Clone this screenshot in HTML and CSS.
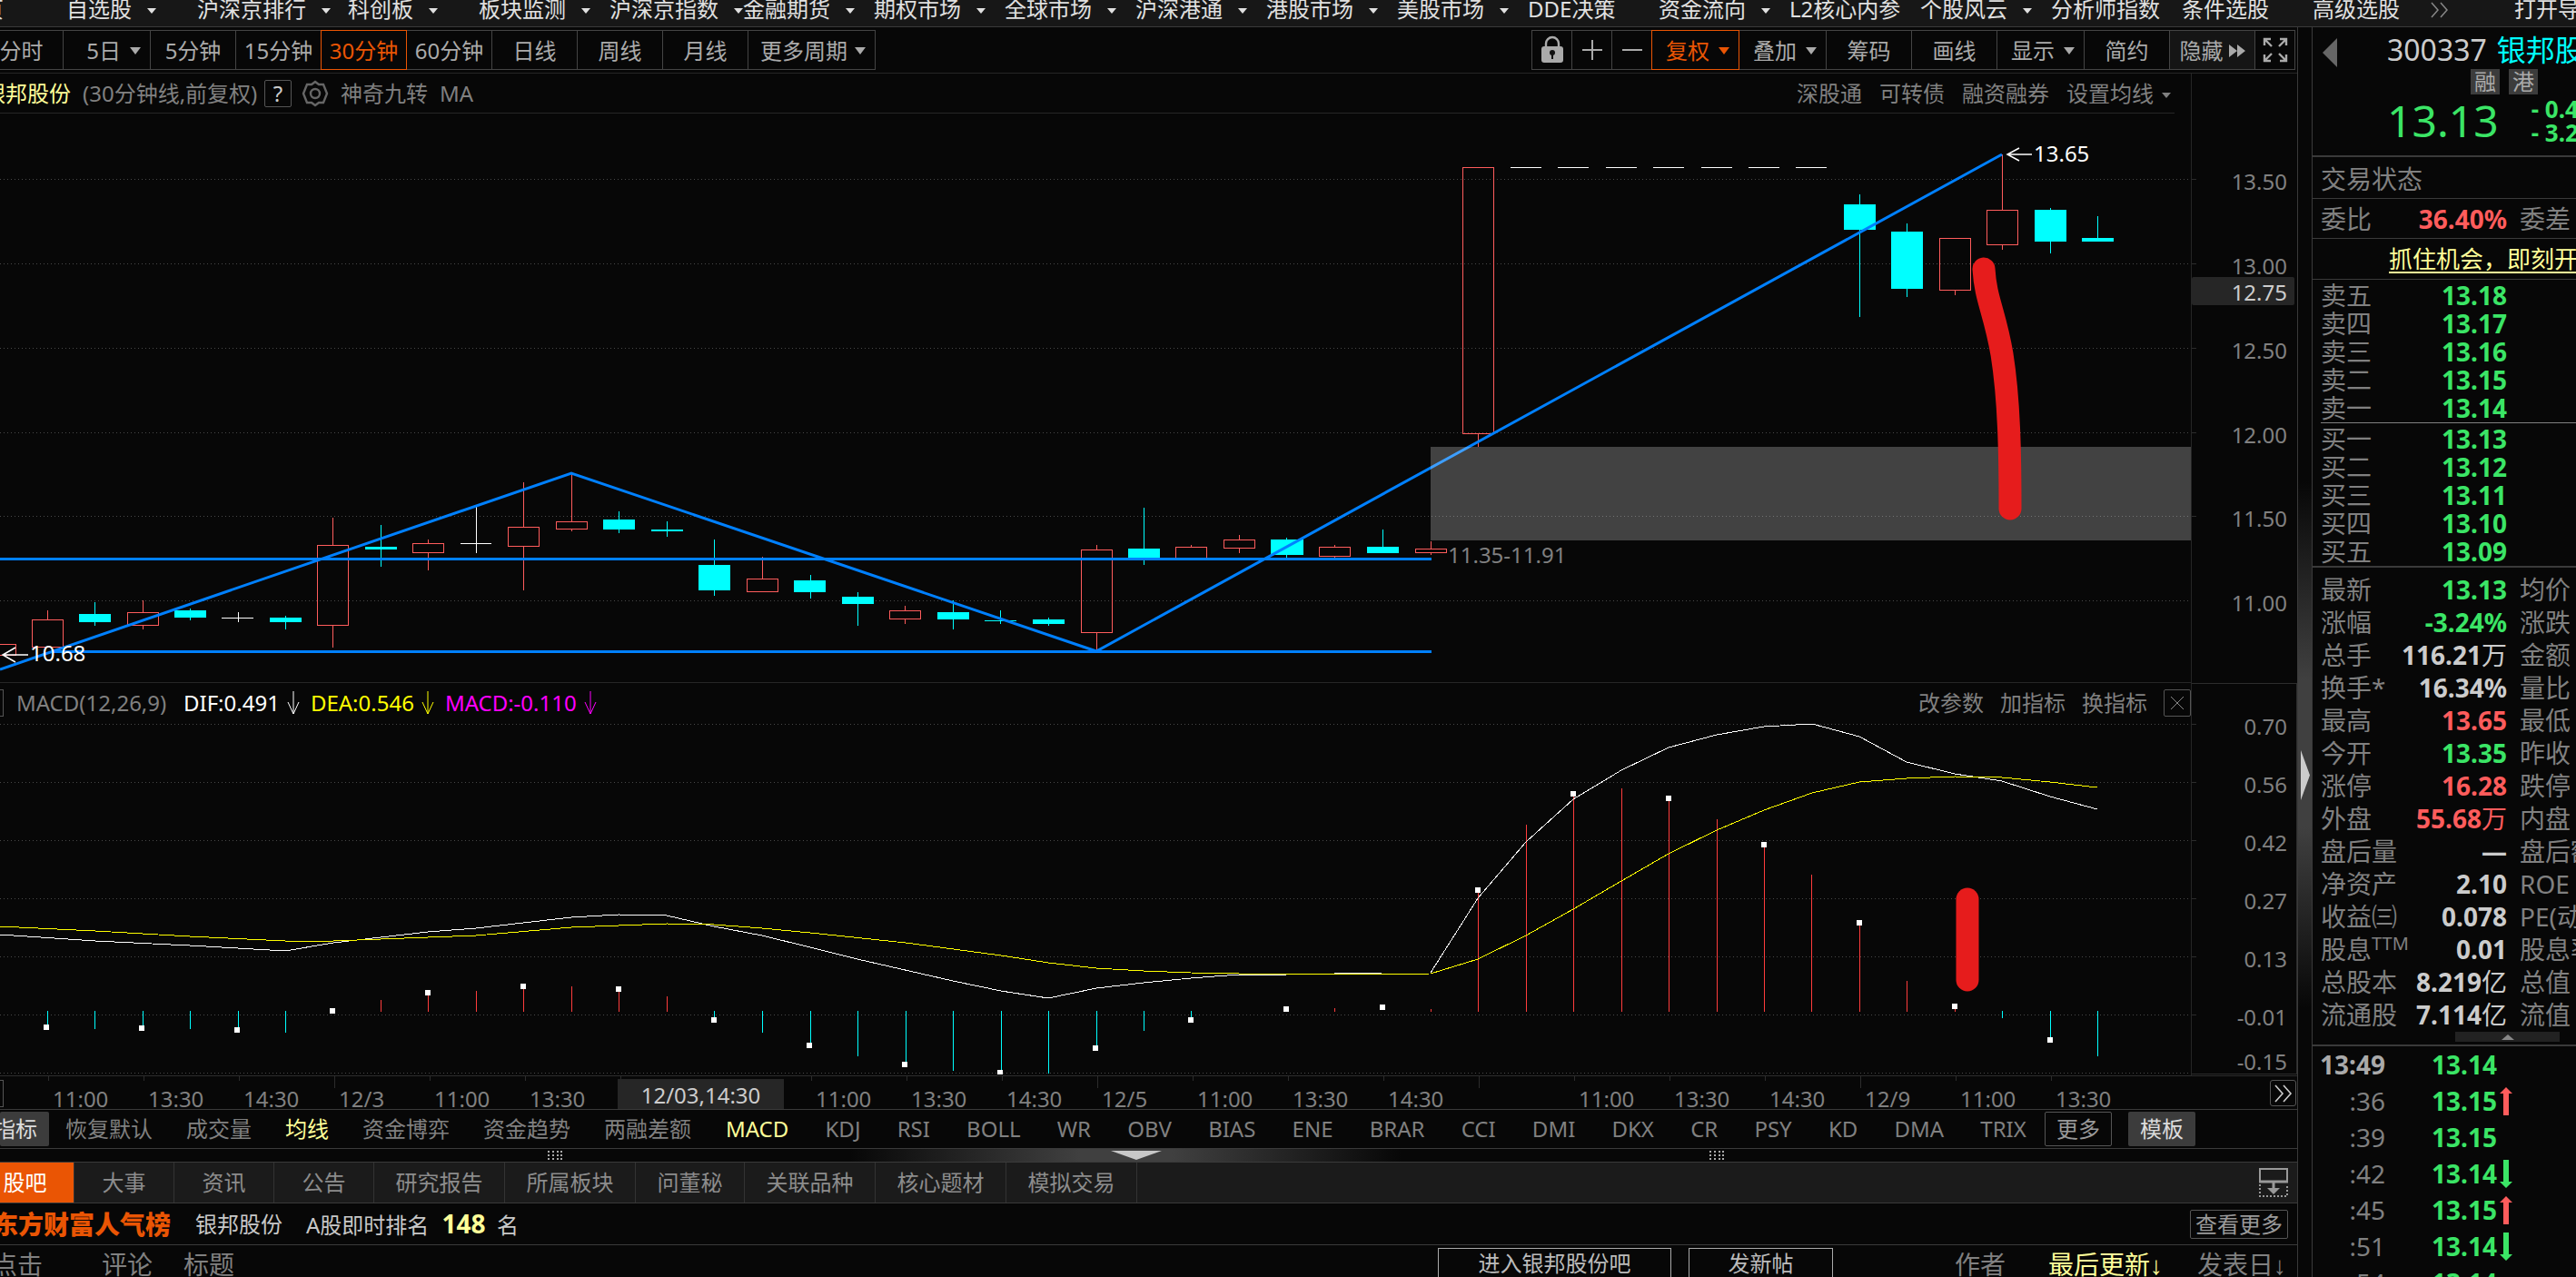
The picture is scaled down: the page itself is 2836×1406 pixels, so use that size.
FILE: index.html
```html
<!DOCTYPE html>
<html lang="zh-CN">
<head>
<meta charset="utf-8">
<title>银邦股份 300337</title>
<link rel="stylesheet" href="styles.css">
</head>
<body>
<nav class="menu">
  <a class="menu-cut" href="#">页</a>
  <a href="#" class="drop">自选股</a>
  <a href="#" class="drop wide">沪深京排行</a>
  <a href="#" class="drop">科创板</a>
  <a href="#" class="drop">板块监测</a>
  <a href="#" class="drop">沪深京指数</a>
  <a href="#" class="drop">金融期货</a>
  <a href="#" class="drop">期权市场</a>
  <a href="#" class="drop">全球市场</a>
  <a href="#" class="drop">沪深港通</a>
  <a href="#" class="drop">港股市场</a>
  <a href="#" class="drop">美股市场</a>
  <a href="#">DDE决策</a>
  <a href="#" class="drop">资金流向</a>
  <a href="#">L2核心内参</a>
  <a href="#" class="drop">个股风云</a>
  <a href="#">分析师指数</a>
  <a href="#">条件选股</a>
  <a href="#" class="fit">高级选股</a>
  <a href="#" class="more" aria-label="更多"><svg width="20" height="18" viewBox="0 0 20 18"><path d="M1 1l7 8-7 8M11 1l7 8-7 8" fill="none" stroke="#888" stroke-width="1.5"/></svg></a>
  <a href="#">打开导航</a>
</nav>
<div class="app">
<main class="work">
  <div class="toolbar">
    <div class="group">
      <button class="first">分时</button><button class="drop">5日</button><button>5分钟</button><button>15分钟</button><button class="on">30分钟</button><button>60分钟</button><button>日线</button><button>周线</button><button>月线</button><button class="drop wide">更多周期</button>
    </div>
    <div class="group">
      <button class="tool" aria-label="锁定"><svg width="26" height="32" viewBox="0 0 26 32"><path d="M6 14V9a7 7 0 0 1 14 0v5" fill="none" stroke="#aaa" stroke-width="2.4"/><rect x="1" y="12" width="24" height="18" rx="3" fill="#aaa"/><circle cx="13" cy="19" r="3" fill="#111"/><path d="M12 19h2v7h-2z" fill="#111"/></svg></button><button class="tool" aria-label="放大"><svg width="24" height="24" viewBox="0 0 24 24"><path d="M1 12h22M12 1v22" stroke="#aaa" stroke-width="2"/></svg></button><button class="tool" aria-label="缩小"><svg width="24" height="24" viewBox="0 0 24 24"><path d="M1 12h22" stroke="#aaa" stroke-width="2"/></svg></button><button class="drop on">复权</button><button class="drop">叠加</button><button>筹码</button><button>画线</button><button class="drop">显示</button><button>简约</button><button class="hide">隐藏<svg width="18" height="14" viewBox="0 0 18 14"><path d="M0 0l9 7-9 7zM9 0l9 7-9 7z" fill="#aaa"/></svg></button><button class="tool" aria-label="全屏"><svg width="28" height="28" viewBox="0 0 28 28"><path d="M2 9V2h7M19 2h7v7M26 19v7h-7M9 26H2v-7M3 3l7 7M25 3l-7 7M25 25l-7-7M3 25l7-7" fill="none" stroke="#aaa" stroke-width="2.4"/></svg></button>
    </div>
  </div>

  <section class="chart">
    <div class="plots">
      <header class="chart-head">
        <span class="name">银邦股份</span>
        <span class="desc">(30分钟线,前复权)</span>
        <button class="box" aria-label="帮助">?</button>
        <svg class="gear" width="30" height="30" viewBox="0 0 30 30" fill="none" stroke="#666" stroke-width="2.4"><path d="M15 2l4 3 5 0 2 5 2 5-2 5-2 5-5 0-4 3-4-3-5 0-2-5-2-5 2-5 2-5 5 0z"/><circle cx="15" cy="15" r="5"/></svg>
        <span>神奇九转</span><span>MA</span>
        <div class="links"><a href="#">深股通</a><a href="#">可转债</a><a href="#">融资融券</a><a href="#" class="drop">设置均线</a></div>
      </header>
      <svg class="plot" viewBox="0 125 2412 626" role="img" aria-label="K线图">
        <path class="dots" d="M0 197.5H2412M0 290.5H2412M0 383.5H2412M0 476.5H2412M0 568.5H2412M0 661.5H2412"/>
        <path class="up" d="M-17 709h34v12h-34zM35 682h34v30h-34zM52 672v10M140 674h34v14h-34zM157 661v13M157 688v5M349 600h34v88h-34zM366 570v30M366 688v25M454 598h34v10h-34zM471 594v4M471 608v20M559 580h34v21h-34zM576 531v49M576 601v49M612 574h34v8h-34zM629 521v53M629 582v3M822 637h34v14h-34zM839 613v24M979 672h34v9h-34zM996 667v5M996 681v6M1190 605h34v91h-34zM1207 600v5M1207 696v21M1294 602h34v13h-34zM1311 600v2M1347 594h34v9h-34zM1364 589v5M1364 603v6M1452 602h34v10h-34zM1469 600v2M1469 612v2M1558 604h34v4h-34zM1575 596v8M1575 608v3M1610 184h34v293h-34zM1627 477v15M2135 262h34v57h-34zM2152 319v6M2187 231h34v38h-34zM2204 170v61M2204 269v6"/>
        <path class="down-body" d="M87 676h35v9h-35zM192 672h35v8h-35zM297 680h35v5h-35zM402 602h35v3h-35zM664 572h35v11h-35zM717 583h35v2h-35zM769 622h35v28h-35zM874 639h35v13h-35zM927 657h35v8h-35zM1032 674h35v8h-35zM1084 683h35v1h-35zM1137 682h35v5h-35zM1242 604h35v10h-35zM1399 594h36v17h-36zM1505 602h35v7h-35zM2030 225h35v28h-35zM2082 255h35v63h-35zM2240 231h35v35h-35zM2292 262h35v4h-35z"/>
        <path class="down" d="M104 663v26M209 670v13M314 678v15M419 578v46M681 563v24M734 574v17M786 594v62M892 633v26M944 652v37M1049 661v32M1101 672v15M1154 680v9M1259 559v63M1416 592v22M1522 583v20M2047 214v135M2099 246v81M2257 229v50M2309 238v26"/>
        <path class="flat" d="M244 680h35M262 674v11M507 598h34M524 558v51M1663 184h34M1715 184h34M1768 184h34M1820 184h34M1873 184h34M1925 184h34M1977 184h34"/>
        <path class="trend" d="M0 615.5H1576M56 717.5H1576M0 737L629 521L1207 717L2204 170"/>
        <rect x="1575" y="492" width="837" height="103" fill="#fff" fill-opacity=".24"/>
        <path class="arrow" d="M2210 170h27M2223 163l-13 7 13 7M3 721h28M17 713l-14 8 14 8"/>
        <text class="mark" x="2239" y="178">13.65</text>
        <text class="mark" x="33" y="728">10.68</text>
        <text class="range" x="1594" y="620">11.35-11.91</text>
        <path class="brush" d="M2184 296C2186 330 2196 343 2204 390C2212 440 2213 500 2213 560"/>
      </svg>
      <header class="chart-head macd-head">
        <span class="stub"></span>
        <span class="params">MACD(12,26,9)</span>
        <span class="dif">DIF:0.491<svg width="14" height="28" viewBox="0 0 14 28"><path d="M7 1v25M1 13l6 13 6-13" fill="none" stroke="currentColor"/></svg></span>
        <span class="dea">DEA:0.546<svg width="14" height="28" viewBox="0 0 14 28"><path d="M7 1v25M1 13l6 13 6-13" fill="none" stroke="currentColor"/></svg></span>
        <span class="hist">MACD:-0.110<svg width="14" height="28" viewBox="0 0 14 28"><path d="M7 1v25M1 13l6 13 6-13" fill="none" stroke="currentColor"/></svg></span>
        <div class="links"><a href="#">改参数</a><a href="#">加指标</a><a href="#">换指标</a><button class="box" aria-label="关闭"><svg width="16" height="16" viewBox="0 0 16 16"><path d="M1 1l14 14M15 1L1 15" stroke="#888"/></svg></button></div>
      </header>
      <svg class="plot" viewBox="0 796 2412 388" role="img" aria-label="MACD指标">
        <path class="dots" d="M0 797.5H2412M0 861.5H2412M0 925.5H2412M0 989.5H2412M0 1053.5H2412M0 1117.5H2412M0 1181.5H2412"/>
        <path class="bar-up" d="M419 1101v13M471 1093v21M524 1091v23M576 1088v26M629 1086v28M681 1091v23M734 1097v17M1469 1110v4M1575 1111v3M1627 980v134M1680 908v206M1732 873v241M1785 868v246M1837 879v235M1890 902v212M1942 931v183M1994 963v151M2047 1017v97M2099 1080v34M2152 1108v6"/>
        <path class="down" d="M52 1113v18M104 1113v20M157 1113v19M209 1113v20M262 1113v20M314 1113v24M786 1113v10M839 1113v24M892 1113v37M944 1113v50M997 1113v58M1049 1113v66M1102 1113v66M1154 1113v69M1207 1113v40M1259 1113v22M1311 1113v8M2204 1113v8M2257 1113v31M2309 1113v50"/>
        <path class="line-dif" d="M0 1029L105 1036L209 1041L262 1044L314 1047L367 1038L419 1032L471 1026L524 1022L576 1016L629 1010L681 1007L734 1008L786 1020L839 1030L892 1043L944 1056L1049 1080L1102 1091L1154 1099L1207 1088L1259 1082L1311 1077L1364 1073L1416 1073L1522 1071L1575 1071L1627 989L1680 927L1732 880L1785 848L1837 823L1890 809L1942 800L1995 797L2047 811L2099 839L2152 852L2204 860L2257 877L2309 891"/>
        <path class="line-dea" d="M0 1020L105 1025L209 1031L314 1036L367 1036L419 1034L524 1030L629 1021L734 1017L786 1018L839 1022L892 1027L997 1038L1102 1052L1154 1060L1207 1066L1259 1069L1311 1071L1416 1073L1575 1072L1627 1056L1680 1030L1732 1001L1785 970L1837 940L1890 914L1942 892L1995 873L2047 861L2099 857L2152 855L2204 856L2257 861L2309 867"/>
        <path class="dot" d="M48 1128h6v6h-6zM153 1129h6v6h-6zM258 1131h6v6h-6zM363 1110h6v6h-6zM468 1090h6v6h-6zM573 1083h6v6h-6zM678 1086h6v6h-6zM783 1120h6v6h-6zM888 1148h6v6h-6zM993 1169h6v6h-6zM1098 1178h6v5h-6zM1203 1151h6v6h-6zM1308 1120h6v6h-6zM1413 1108h6v6h-6zM1519 1106h6v6h-6zM1624 977h6v6h-6zM1729 871h6v6h-6zM1834 876h6v6h-6zM1939 927h6v6h-6zM2044 1013h6v6h-6zM2149 1105h6v6h-6zM2254 1142h6v6h-6z"/>
        <path class="brush" d="M2166 990V1079"/>
      </svg>
    </div>
    <svg class="axis" viewBox="0 81 116 1103" role="img" aria-label="坐标轴">
      <path class="ticks" d="M0 197.500h5M0 290.500h5M0 383.500h5M0 476.500h5M0 568.500h5M0 752H116M0 797.500h5M0 861.500h5M0 925.500h5M0 989.500h5M0 1053.500h5M0 1117.500h5M0 1182H116M115 752V1182"/>
      <rect x="0" y="305" width="113" height="31" rx="2" fill="#262626"/>
      <g class="scale">
        <text x="105" y="209">13.50</text><text x="105" y="302">13.00</text><text class="now" x="105" y="331">12.75</text><text x="105" y="395">12.50</text><text x="105" y="488">12.00</text><text x="105" y="580">11.50</text><text x="105" y="673">11.00</text>
        <text x="105" y="809">0.70</text><text x="105" y="873">0.56</text><text x="105" y="937">0.42</text><text x="105" y="1001">0.27</text><text x="105" y="1065">0.13</text><text x="105" y="1129">-0.01</text><text x="105" y="1178">-0.15</text>
      </g>
    </svg>
  </section>

  <div class="times">
    <i class="stub"></i>
    <span>11:00</span><span>13:30</span><span>14:30</span><span class="day">12/3</span><span>11:00</span><span>13:30</span><span class="cursor"><b>12/03,14:30</b></span><span class="under"></span><span>11:00</span><span>13:30</span><span>14:30</span><span class="day">12/5</span><span>11:00</span><span>13:30</span><span>14:30</span><span class="day"></span><span>11:00</span><span>13:30</span><span>14:30</span><span class="day">12/9</span><span>11:00</span><span>13:30</span>
    <button class="next" aria-label="展开"><svg width="20" height="20" viewBox="0 0 20 20"><path d="M1 1l8 9-8 9M10 1l8 9-8 9" fill="none" stroke="#ccc" stroke-width="1.6"/></svg></button>
  </div>

  <div class="indicators">
    <button class="solid lead">指标</button>
    <div class="list named">
      <a href="#">恢复默认</a><a href="#">成交量</a><a href="#" class="on">均线</a><a href="#">资金博弈</a><a href="#">资金趋势</a><a href="#">两融差额</a>
    </div>
    <div class="list coded">
      <a href="#" class="on">MACD</a><a href="#">KDJ</a><a href="#">RSI</a><a href="#">BOLL</a><a href="#">WR</a><a href="#">OBV</a><a href="#">BIAS</a><a href="#">ENE</a><a href="#">BRAR</a><a href="#">CCI</a><a href="#">DMI</a><a href="#">DKX</a><a href="#">CR</a><a href="#">PSY</a><a href="#">KD</a><a href="#">DMA</a><a href="#">TRIX</a>
    </div>
    <button class="line">更多</button>
    <button class="solid">模板</button>
  </div>

  <div class="splitter">
    <svg width="16" height="10" viewBox="0 0 16 10"><path d="M1 0v10M6 0v10M11 0v10M15 0v10" stroke="#aaa" stroke-width="2" stroke-dasharray="2 2"/></svg>
    <svg width="56" height="10" viewBox="0 0 56 10"><path d="M0 0h56L28 10z" fill="#c8c8c8"/></svg>
    <svg width="16" height="10" viewBox="0 0 16 10"><path d="M1 0v10M6 0v10M11 0v10M15 0v10" stroke="#aaa" stroke-width="2" stroke-dasharray="2 2"/></svg>
  </div>

  <div class="tabs">
    <button class="on">股吧</button><button>大事</button><button>资讯</button><button>公告</button><button class="w4">研究报告</button><button class="w4">所属板块</button><button class="w3">问董秘</button><button class="w4">关联品种</button><button class="w4">核心题材</button><button class="w4">模拟交易</button>
    <svg class="dock" width="32" height="32" viewBox="0 0 32 32" fill="none" stroke="#999"><path d="M1 15V1h30v14z" stroke-width="2"/><path d="M0 15h32M16 15v12" stroke-width="3"/><path d="M9 22h14l-7 7z" fill="#999" stroke="none"/><path d="M1 18v13h30V18" stroke-width="2" stroke-dasharray="2 2"/></svg>
  </div>

  <div class="rank">
    <strong class="brand">东方财富人气榜</strong>
    <span>银邦股份</span>
    <span class="pos">A股即时排名 <b>148</b> 名</span>
    <button class="line">查看更多</button>
  </div>

  <div class="posts">
    <button class="sort c1">点击</button><button class="sort c2">评论</button><button class="sort">标题</button>
    <button class="post enter">进入银邦股份吧</button><button class="post fresh">发新帖</button>
    <button class="sort author">作者</button><button class="sort on latest">最后更新<span>↓</span></button><button class="sort">发表日<span>↓</span></button>
  </div>
</main>

<div class="gutter"><svg width="10" height="55" viewBox="0 0 10 55"><path d="M0 0l10 27.500L0 55z" fill="#ccc"/></svg></div>

<aside class="side">
  <section class="quote">
    <div class="title"><button class="prev" aria-label="上一只"><svg width="16" height="32" viewBox="0 0 16 32"><path d="M16 0v32L0 16z" fill="#666"/></svg></button><span class="code">300337</span><span class="stock">银邦股份</span></div>
    <div class="badges"><span>融</span><span>港</span></div>
    <div class="price"><b>13.13</b><span>- 0.44<br>- 3.24%</span></div>
  </section>
  <div class="state">交易状态</div>
  <table class="ratio"><tr><th>委比</th><td class="r">36.40%</td><th class="second">委差</th></tr></table>
  <div class="promo"><a href="#">抓住机会，即刻开户</a></div>
  <table class="book sell">
    <tr><th>卖五</th><td>13.18</td></tr><tr><th>卖四</th><td>13.17</td></tr><tr><th>卖三</th><td>13.16</td></tr><tr><th>卖二</th><td>13.15</td></tr><tr><th>卖一</th><td>13.14</td></tr>
  </table>
  <div class="rule"></div>
  <table class="book buy">
    <tr><th>买一</th><td>13.13</td></tr><tr><th>买二</th><td>13.12</td></tr><tr><th>买三</th><td>13.11</td></tr><tr><th>买四</th><td>13.10</td></tr><tr><th>买五</th><td>13.09</td></tr>
  </table>
  <table class="stats">
    <tr><th>最新</th><td class="g">13.13</td><th class="second">均价</th></tr>
    <tr><th>涨幅</th><td class="g">-3.24%</td><th class="second">涨跌</th></tr>
    <tr><th>总手</th><td>116.21<i>万</i></td><th class="second">金额</th></tr>
    <tr><th>换手*</th><td>16.34%</td><th class="second">量比</th></tr>
    <tr><th>最高</th><td class="r">13.65</td><th class="second">最低</th></tr>
    <tr><th>今开</th><td class="g">13.35</td><th class="second">昨收</th></tr>
    <tr><th>涨停</th><td class="r">16.28</td><th class="second">跌停</th></tr>
    <tr><th>外盘</th><td class="r">55.68<i>万</i></td><th class="second">内盘</th></tr>
    <tr><th>盘后量</th><td>—</td><th class="second">盘后额</th></tr>
    <tr><th>净资产</th><td>2.10</td><th class="second">ROE</th></tr>
    <tr><th>收益㈢</th><td>0.078</td><th class="second">PE(动)</th></tr>
    <tr><th>股息<sup>TTM</sup></th><td>0.01</td><th class="second">股息率</th></tr>
    <tr><th>总股本</th><td>8.219<i>亿</i></td><th class="second">总值</th></tr>
    <tr><th>流通股</th><td>7.114<i>亿</i></td><th class="second">流值</th></tr>
  </table>
  <div class="handle"><button aria-label="收起"><svg width="14" height="6" viewBox="0 0 14 6"><path d="M0 6l7-6 7 6z" fill="#888"/></svg></button></div>
  <table class="deals">
    <tr><th class="full">13:49</th><td>13.14</td><td class="dir"></td></tr>
    <tr><th>:36</th><td>13.15</td><td class="dir r"><svg width="14" height="31" viewBox="0 0 14 31"><path d="M7 0l7 7h-4v24H4V7H0z" fill="currentColor"/></svg></td></tr>
    <tr><th>:39</th><td>13.15</td><td class="dir"></td></tr>
    <tr><th>:42</th><td>13.14</td><td class="dir"><svg width="14" height="31" viewBox="0 0 14 31"><path d="M7 31l7-7h-4V0H4v24H0z" fill="currentColor"/></svg></td></tr>
    <tr><th>:45</th><td>13.15</td><td class="dir r"><svg width="14" height="31" viewBox="0 0 14 31"><path d="M7 0l7 7h-4v24H4V7H0z" fill="currentColor"/></svg></td></tr>
    <tr><th>:51</th><td>13.14</td><td class="dir"><svg width="14" height="31" viewBox="0 0 14 31"><path d="M7 31l7-7h-4V0H4v24H0z" fill="currentColor"/></svg></td></tr>
    <tr><th>:54</th><td>13.14</td><td class="dir"></td></tr>
  </table>
</aside>
</div>
</body>
</html>
```
FILE: styles.css
```css
* { box-sizing: border-box; }
body {
  margin: 0;
  height: 100vh;
  overflow: hidden;
  display: flex;
  flex-direction: column;
  background: #070707;
  color: #808080;
  font: 24px/32px "Noto Sans", "Noto Sans CJK SC", sans-serif;
}
a { color: inherit; text-decoration: none; white-space: nowrap; }
button {
  margin: 0;
  padding: 0;
  border: 0;
  background: none;
  color: inherit;
  font: inherit;
  white-space: nowrap;
}
svg { display: block; flex: none; }
table { border-collapse: collapse; border-spacing: 0; }
th, td { padding: 0; font-weight: 400; text-align: left; white-space: nowrap; }
.drop::after {
  content: "";
  display: inline-block;
  margin-left: 18px;
  border: 5px solid transparent;
  border-top: 6px solid currentColor;
  border-bottom: 0;
  vertical-align: 4px;
}

/* top menu */
.menu {
  flex: none;
  display: flex;
  height: 30px;
  overflow: hidden;
  background: #171717;
  border-bottom: 1px solid #3a3a3a;
  color: #e0e0e0;
  line-height: 20px;
}
.menu a { flex: 0 0 144px; }
.menu .menu-cut { flex-basis: 73px; text-indent: -20px; }
.menu .wide { flex-basis: 166px; }
.menu .fit { flex-basis: 130px; }
.menu .more { flex-basis: 92px; }
.menu .more svg { margin-top: 2px; }
.menu .drop::after { margin-left: 17px; }

.app { flex: 1; min-height: 0; display: flex; }
.work { flex: 1; min-width: 0; border-right: 1px solid #3a3a3a; }

/* period toolbar */
.toolbar {
  display: flex;
  justify-content: space-between;
  height: 51px;
  padding: 3px 2px 0 0;
  border-bottom: 1px solid #262626;
  color: #aaa;
}
.group { display: flex; padding-right: 1px; }
.group button {
  width: 95px;
  height: 44px;
  margin-right: -1px;
  padding-top: 2px;
  border: 1px solid #444;
  line-height: 40px;
  display: flex;
  align-items: center;
  justify-content: center;
}
.group .first { width: 70px; padding-right: 22px; border-left: 0; }
.group .drop { width: 97px; justify-content: flex-end; padding-right: 10px; }
.group .drop::after { margin-left: 10px; border-width: 8px 6px 0; }
.group .wide { width: 141px; }
.group .wide::after { margin-left: 8px; }
.group .tool { width: 45px; padding-top: 0; }
.group .on { position: relative; border-color: #ea5504; color: #ea5504; }
.group .hide { background: #151515; gap: 6px; }

/* charts */
.chart { display: grid; grid-template-columns: 1fr 117px; }
.plots { min-width: 0; }
.plot { width: 100%; height: auto; }
.axis { width: 117px; height: 100%; border-left: 1px solid #262626; }
.chart-head {
  display: flex;
  align-items: center;
  height: 44px;
  margin-right: 18px;
  border-bottom: 1px solid #262626;
  white-space: nowrap;
}
.chart-head .name { width: 91px; color: #ff9; text-indent: -18px; }
.chart-head .desc { width: 200px; }
.box {
  width: 30px;
  height: 30px;
  border: 1px solid #555;
  border-radius: 2px;
  color: #ccc;
  line-height: 26px;
  display: flex;
  align-items: center;
  justify-content: center;
}
.gear { margin: 0 13px 0 11px; }
.gear + span { margin-right: 13px; }
.links { display: flex; align-items: center; gap: 19px; margin-left: auto; }
.links .drop::after { margin: 0 4px 0 9px; }
.macd-head {
  height: 45px;
  margin: 0;
  border-top: 1px solid #262626;
  border-bottom: 0;
}
.stub { width: 4px; height: 30px; border: 1px solid #555; border-left: 0; }
.macd-head .stub { margin-right: 14px; }
.params { width: 172px; }
.macd-head .dif, .macd-head .dea, .macd-head .hist { display: flex; align-items: center; gap: 8px; margin-left: 12px; }
.dif { color: #fff; }
.dea { color: #ff0; }
.hist { color: #f0f; }
.macd-head .links { gap: 18px; }

.dots, .ticks, .up, .down, .flat, .bar-up, .line-dif, .line-dea { fill: none; shape-rendering: crispEdges; }
.dots { stroke: #484848; stroke-dasharray: 1 3; }
.ticks { stroke: #2c2c2c; }
.up { stroke: #ff5c5c; }
.bar-up { stroke: #ff3c3c; }
.down { stroke: #0ff; }
.down-body { fill: #0ff; }
.flat { stroke: #fff; }
.dot { fill: #fff; }
.trend { fill: none; stroke: #0080ff; stroke-width: 3; }
.arrow { fill: none; stroke: #fff; stroke-width: 1.5; }
.brush { fill: none; stroke: #e61c1c; stroke-width: 25; stroke-linecap: round; }
.line-dif { stroke: #fff; }
.line-dea { stroke: #ff0; }
.mark { fill: #fff; }
.range { fill: #808080; }
.scale { fill: #808080; text-anchor: end; }
.scale .now { fill: #ccc; }

/* time axis */
.times {
  display: flex;
  height: 38px;
  border-top: 1px solid #2c2c2c;
  border-bottom: 1px solid #3a3a3a;
  line-height: 50px;
}
.times .stub { flex: none; margin: 4px 49px 0 0; }
.times span {
  flex: 0 0 105px;
  min-width: 0;
  height: 36px;
  padding-left: 5px;
  background: linear-gradient(#2c2c2c, #2c2c2c) 0 0 / 1px 5px no-repeat;
}
.times .day { background-size: 1px 13px; }
.times .under { background: none; }
.times .cursor { padding: 0; }
.times .cursor b {
  display: block;
  width: 183px;
  height: 33px;
  margin: 3px 0 0 -3px;
  background: #262626;
  color: #ccc;
  font-weight: 400;
  line-height: 36px;
  text-align: center;
}
.next {
  width: 29px;
  height: 29px;
  margin: 4px 1px 0 auto;
  border: 1px solid #555;
  border-radius: 3px;
  display: flex;
  align-items: center;
  justify-content: center;
}

/* indicator list */
.indicators {
  display: flex;
  align-items: center;
  height: 43px;
  padding-right: 112px;
  border-bottom: 1px solid #3a3a3a;
}
.list { display: flex; }
.named { gap: 37px; padding: 0 38px 0 18px; }
.coded { flex: 1; justify-content: space-between; padding-right: 20px; line-height: 28px; }
.indicators .on { color: #ff9; }
.indicators button { width: 74px; height: 38px; line-height: 36px; }
.line { border: 1px solid #555; border-radius: 2px; color: #999; }
.solid { background: #3c3c3c; color: #ddd; border-radius: 2px; }
.indicators .line { margin-right: 18px; }
.indicators .lead { width: 54px; text-indent: -20px; }

.splitter {
  display: flex;
  justify-content: space-between;
  align-items: center;
  height: 14px;
  padding: 0 631px 0 603px;
  background: linear-gradient(90deg, transparent 37%, #404040 47%, #404040 51%, transparent 61%);
}

/* lower tabs */
.tabs {
  display: flex;
  align-items: center;
  height: 46px;
  padding-right: 10px;
  background: #1b1b1b;
  border-top: 1px solid #3a3a3a;
  border-bottom: 1px solid #3a3a3a;
}
.tabs button { width: 110px; height: 44px; border-right: 1px solid #333; color: #8c8c8c; }
.tabs .w3 { width: 120px; }
.tabs .w4 { width: 144px; }
.tabs .on { width: 82px; padding-right: 26px; background: #ea5504; color: #fff; }
.dock { margin-left: auto; }

.rank {
  display: flex;
  align-items: center;
  height: 46px;
  padding-right: 10px;
  border-bottom: 1px solid #3a3a3a;
  color: #c8c8c8;
  white-space: nowrap;
}
.brand { width: 215px; color: #ea5504; font-size: 28px; font-weight: 900; text-indent: -8px; }
.pos { margin-left: 26px; }
.pos b { margin: 0 6px 0 8px; color: #ff9; font-size: 28px; }
.rank .line { width: 108px; height: 32px; margin-left: auto; line-height: 30px; }

.posts { display: flex; align-items: flex-start; height: 44px; padding: 3px 12px 0 0; font-size: 28px; line-height: 36px; }
.sort { text-align: left; }
.sort span { font-family: "Liberation Sans", sans-serif; }
.sort.on { color: #ff9; }
.c1 { width: 112px; text-indent: -9px; }
.c2 { width: 90px; }
.post { height: 33px; border: 1px solid #aaa; color: #bbb; font-size: 24px; line-height: 31px; }
.enter { width: 257px; margin-left: auto; }
.fresh { width: 159px; margin: 0 134px 0 19px; }
.author { margin-right: 47px; }
.latest { margin-right: 38px; }

/* divider between chart and quote panel */
.gutter {
  flex: 0 0 15px;
  display: flex;
  justify-content: center;
  padding-top: 796px;
  background: linear-gradient(#070707 500px, #404040 720px, #404040 880px, #070707 1080px);
}

/* quote panel */
.side {
  flex: 0 0 291px;
  overflow: hidden;
  border-left: 1px solid #3a3a3a;
  font-size: 28px;
}
.quote { height: 143px; border-bottom: 2px solid #3a3a3a; white-space: nowrap; }
.title { display: flex; align-items: center; height: 46px; padding: 4px 0 0 11px; font-size: 32px; }
.prev { margin: 6px 55px 0 0; }
.code { margin-right: 11px; color: #ccc; }
.stock { color: #0ff; }
.badges { display: flex; gap: 10px; padding-left: 174px; font-size: 24px; line-height: 28px; }
.badges span { width: 32px; background: #3c3c3c; color: #aaa; text-align: center; }
.price { display: flex; align-items: center; gap: 36px; height: 60px; padding: 0 0 2px 82px; color: #3be566; font-size: 48px; }
.price b { font-weight: 400; }
.price span { font-size: 26px; font-weight: 700; line-height: 26px; }
.state { height: 46px; padding-left: 9px; border-bottom: 1px solid #3a3a3a; line-height: 48px; }
.ratio { height: 44px; border-bottom: 1px solid #3a3a3a; }
.promo { height: 45px; padding-left: 84px; border-bottom: 1px solid #3a3a3a; color: #ff9; font-size: 26px; line-height: 44px; }
.promo a { text-decoration: underline; text-underline-offset: 4px; text-decoration-thickness: 2px; }
.side table { table-layout: fixed; width: 291px; }
.side th { width: 90px; padding-left: 9px; }
.side td { width: 124px; font-weight: 700; text-align: right; color: #ccc; }
.side .second { width: 77px; padding-left: 14px; }
.side .g, .side .book td, .side .deals td { color: #3be566; }
.side .r, .side .deals .r { color: #ff5c5c; }
.side .book { width: 214px; }
.book tr { height: 31px; line-height: 31px; }
.sell { margin-top: 2px; }
.rule { height: 1px; margin: 0 0 2px 9px; background: #808080; }
.stats tr { height: 36px; line-height: 36px; }
.side .stats { border-top: 2px solid #3a3a3a; border-collapse: separate; padding-top: 6px; }
.stats i { font-style: normal; font-weight: 400; }
.stats sup { font-size: 20px; line-height: 10px; }
.handle { height: 17px; padding: 1px 0 0 157px; border-bottom: 2px solid #3a3a3a; }
.handle button { width: 115px; height: 11px; background: #222; display: flex; align-items: center; justify-content: center; }
.deals tr { height: 40px; line-height: 40px; }
.side .deals th { width: 80px; text-align: right; }
.side .deals .full { padding: 0; font-weight: 700; color: #aaa; }
.side .deals td { width: 123px; }
.side .deals .dir { width: 88px; padding-left: 3px; }
```
